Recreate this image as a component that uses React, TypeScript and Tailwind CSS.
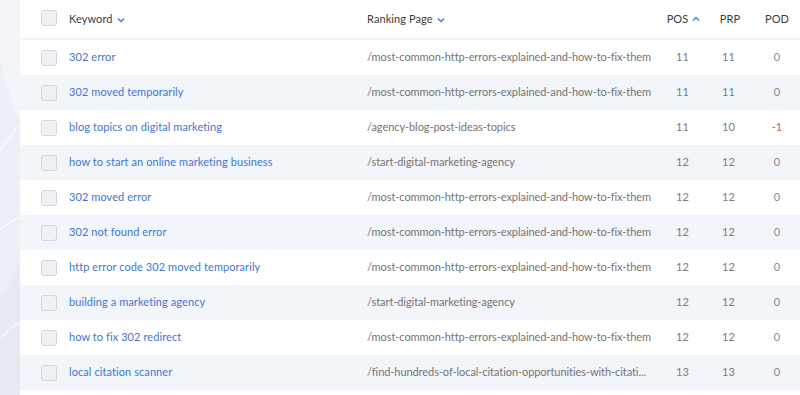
import React from "react";

const rows = [
  { k: "302 error", p: "/most-common-http-errors-explained-and-how-to-fix-them", pos: "11", prp: "11", pod: "0" },
  { k: "302 moved temporarily", p: "/most-common-http-errors-explained-and-how-to-fix-them", pos: "11", prp: "11", pod: "0" },
  { k: "blog topics on digital marketing", p: "/agency-blog-post-ideas-topics", pos: "11", prp: "10", pod: "-1" },
  { k: "how to start an online marketing business", p: "/start-digital-marketing-agency", pos: "12", prp: "12", pod: "0" },
  { k: "302 moved error", p: "/most-common-http-errors-explained-and-how-to-fix-them", pos: "12", prp: "12", pod: "0" },
  { k: "302 not found error", p: "/most-common-http-errors-explained-and-how-to-fix-them", pos: "12", prp: "12", pod: "0" },
  { k: "http error code 302 moved temporarily", p: "/most-common-http-errors-explained-and-how-to-fix-them", pos: "12", prp: "12", pod: "0" },
  { k: "building a marketing agency", p: "/start-digital-marketing-agency", pos: "12", prp: "12", pod: "0" },
  { k: "how to fix 302 redirect", p: "/most-common-http-errors-explained-and-how-to-fix-them", pos: "12", prp: "12", pod: "0" },
  { k: "local citation scanner", p: "/find-hundreds-of-local-citation-opportunities-with-citati...", pos: "13", prp: "13", pod: "0" },
];

const Box = () => (
  <div className="w-[16px] h-[16px] rounded-[3px] border border-[#d3d6dc] bg-[#eff1f5]" />
);

const Down = () => (
  <svg width="8" height="6" viewBox="0 0 8 6" className="ml-[4px] mt-[2px]">
    <path d="M1 1.5 L4 4.5 L7 1.5" fill="none" stroke="#3f7fd8" strokeWidth="1.4" />
  </svg>
);
const Up = () => (
  <svg width="8" height="6" viewBox="0 0 8 6" className="ml-[4px]">
    <path d="M1 4.5 L4 1.5 L7 4.5" fill="none" stroke="#3f7fd8" strokeWidth="1.4" />
  </svg>
);

const grid = "grid grid-cols-[49px_298px_293px_45px_49px_46px] items-center";

export default function App() {
  return (
    <div
      className="w-[800px] h-[395px] overflow-hidden flex bg-white text-[11px] tracking-[0.08px]"
      style={{ fontFamily: "Lato, 'Open Sans', sans-serif" }}
    >
      <div className="w-[20px] h-full shrink-0 bg-[#eceff6] relative overflow-hidden">
        <svg width="20" height="395" viewBox="0 0 20 395" className="absolute inset-0">
          <path d="M0 60 C8 90 14 110 20 120 L20 0 L0 0 Z" fill="#f3f5fa" />
          <path d="M0 150 C8 140 14 130 20 125" fill="none" stroke="#f8f9fc" strokeWidth="1.5" />
          <path d="M0 230 C8 222 14 220 20 218" fill="none" stroke="#fafbfd" strokeWidth="1.5" />
          <path d="M0 300 C10 285 15 270 20 262 L20 395 L0 395 Z" fill="#e6eaf3" />
          <path d="M0 340 C8 330 14 325 20 322" fill="none" stroke="#f6f7fb" strokeWidth="1.2" />
        </svg>
      </div>
      <div className="flex-1 flex flex-col">
        <div className={`${grid} h-[40px] border-b-2 border-[#f1f3f8] text-[#3d3d3d] shrink-0`}>
          <div className="pl-[21px] -mt-[3px]"><Box /></div>
          <div className="flex items-center">Keyword<Down /></div>
          <div className="flex items-center">Ranking Page<Down /></div>
          <div className="flex items-center justify-center pl-[2px]">POS<Up /></div>
          <div className="text-center pl-[1px]">PRP</div>
          <div className="text-center">POD</div>
        </div>
        {rows.map((r, i) => (
          <div
            key={i}
            className={`${grid} h-[35px] shrink-0 ${i % 2 === 1 ? "bg-[#f2f5fa]" : "bg-white"}`}
          >
            <div className="pl-[21px]"><Box /></div>
            <div className="text-[#4376d2] whitespace-nowrap">{r.k}</div>
            <div className="text-[#747474] whitespace-nowrap overflow-hidden tracking-[-0.07px]">{r.p}</div>
            <div className="text-center text-[#7c7c7c]">{r.pos}</div>
            <div className="text-center text-[#7c7c7c] pr-[2px]">{r.prp}</div>
            <div className={`text-center ${r.pod === "-1" ? "text-[#e0564f]" : "text-[#8a8a8a]"}`}>{r.pod}</div>
          </div>
        ))}
        <div className="h-[10px] bg-white" />
      </div>
    </div>
  );
}
